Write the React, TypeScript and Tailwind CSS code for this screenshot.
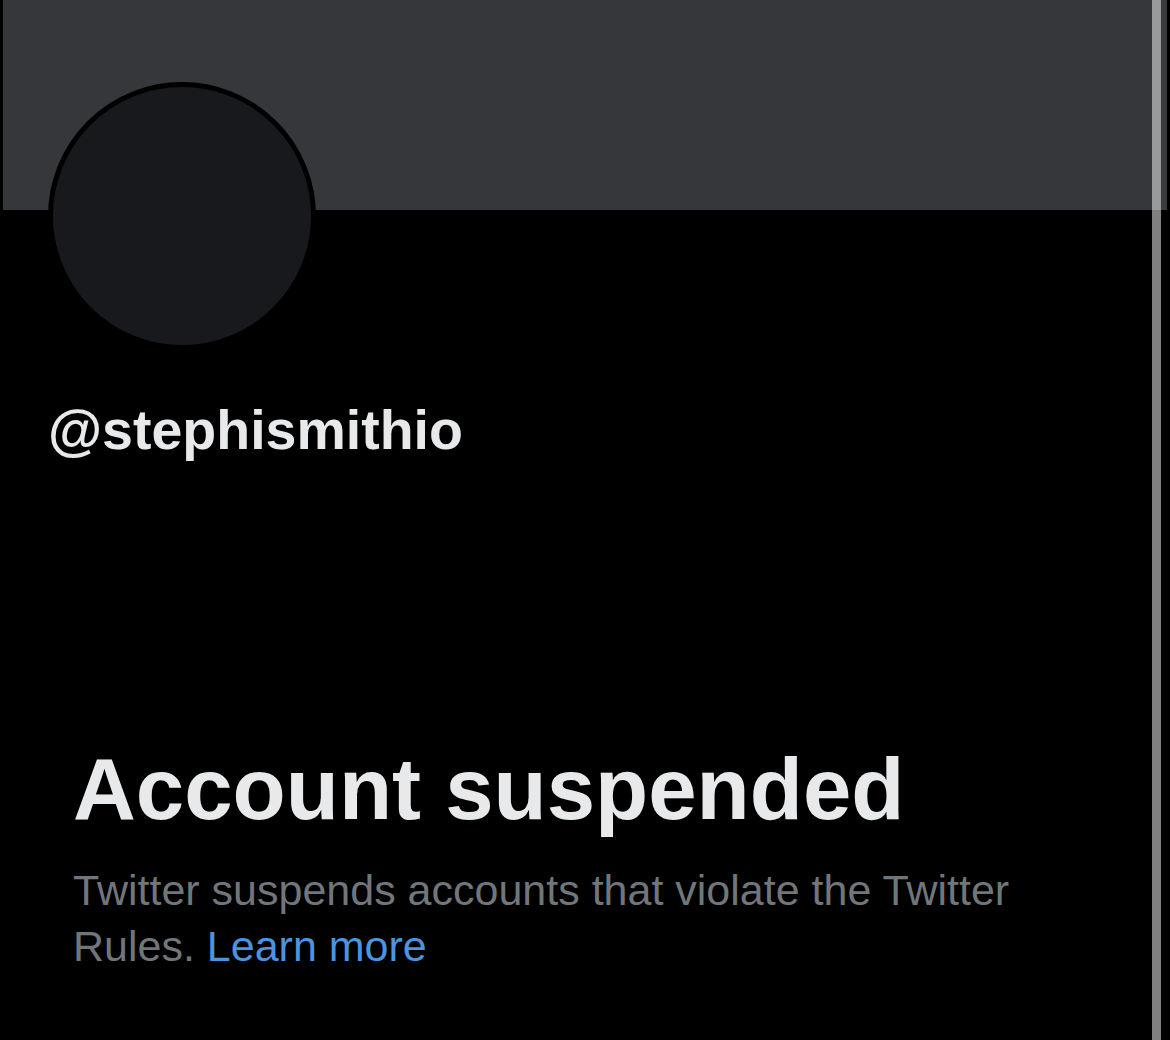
export default function App() {
  return (
    <div
      className="flex h-[1040px] w-[1170px] overflow-hidden bg-black"
      style={{ fontFamily: '"Liberation Sans", Arial, sans-serif' }}
    >
      <div className="w-[3px] shrink-0 bg-black" />

      <div className="flex w-[1149px] shrink-0 flex-col">
        <div className="h-[210px] w-full bg-[#36373b]" />

        <div className="-mt-[128px] ml-[45px] h-[268px] w-[268px] rounded-full border-[5px] border-black bg-[#18191c]" />

        <div className="mt-[53px] pl-[45px] text-[55.5px] font-bold leading-none text-[#e7e9ea]">
          @stephismithio
        </div>

        <div className="mt-[286px] pl-[70px]">
          <h1 className="text-[87px] font-bold leading-none text-[#e7e9ea]">
            Account suspended
          </h1>
          <p className="mt-[30px] w-[980px] text-[43px] leading-[56px] text-[#71767b]">
            Twitter suspends accounts that violate the Twitter Rules.{" "}
            <span className="text-[#4b94e0]">Learn more</span>
          </p>
        </div>
      </div>

      <div className="flex w-[9px] shrink-0 flex-col">
        <div className="h-[210px] bg-[#999a9c]" />
        <div className="flex-1 bg-[#808080]" />
      </div>
      <div className="flex w-[6px] shrink-0 flex-col">
        <div className="h-[210px] bg-[#3b3c40]" />
        <div className="flex-1 bg-black" />
      </div>
      <div className="w-[3px] shrink-0 bg-black" />
    </div>
  );
}
